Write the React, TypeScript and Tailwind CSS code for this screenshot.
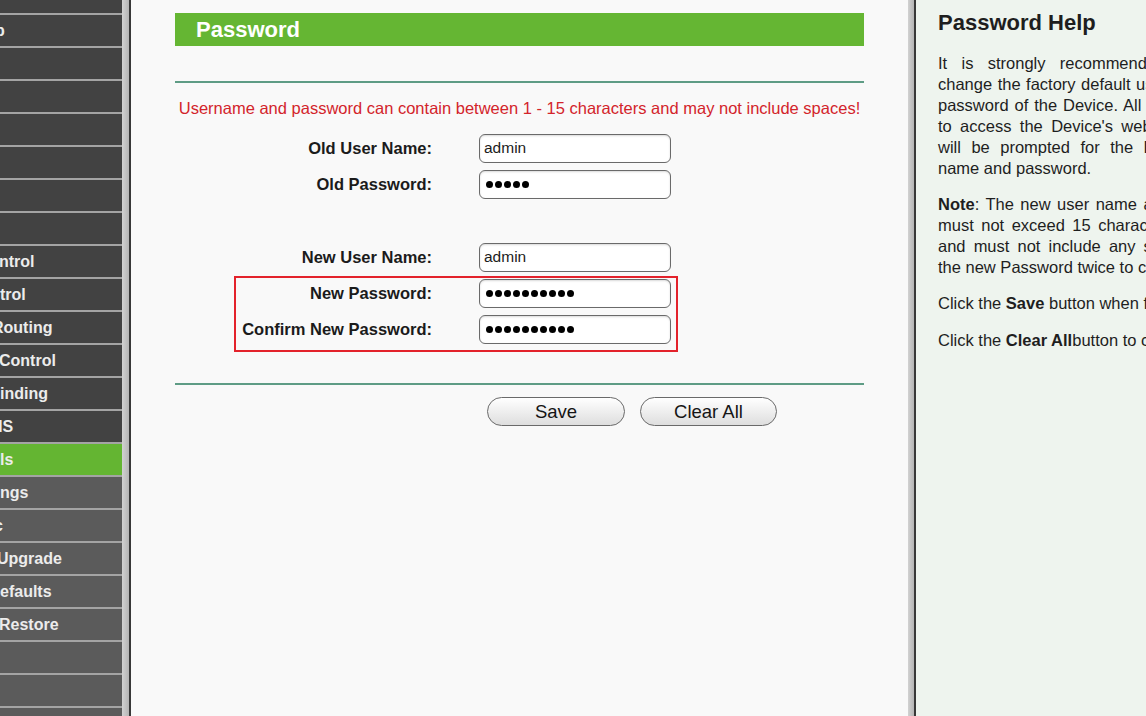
const menu = [
  { label: 'p', shift: '-ml-[5px]', tone: 'dark' },
  { label: '', shift: '', tone: 'dark' },
  { label: '', shift: '', tone: 'dark' },
  { label: '', shift: '', tone: 'dark' },
  { label: '', shift: '', tone: 'dark' },
  { label: '', shift: '', tone: 'dark' },
  { label: '', shift: '', tone: 'dark' },
  { label: 'ntrol', shift: '-ml-[1px]', tone: 'dark' },
  { label: 'trol', shift: '', tone: 'dark' },
  { label: 'Routing', shift: '-ml-[8px]', tone: 'dark' },
  { label: 'Control', shift: '-ml-[1px]', tone: 'dark' },
  { label: 'inding', shift: '', tone: 'dark' },
  { label: 'NS', shift: '-ml-[9px]', tone: 'dark' },
  { label: 'ls', shift: '', tone: 'active' },
  { label: 'ngs', shift: '', tone: 'sub' },
  { label: 'c', shift: '-ml-[6px]', tone: 'sub' },
  { label: 'Upgrade', shift: '-ml-[3px]', tone: 'sub' },
  { label: 'efaults', shift: '', tone: 'sub' },
  { label: 'Restore', shift: '-ml-[1px]', tone: 'sub' },
  { label: '', shift: '', tone: 'sub' },
  { label: '', shift: '', tone: 'sub' },
]

const toneClass: Record<string, string> = {
  dark: 'bg-[#424242]',
  active: 'bg-[#64b532]',
  sub: 'bg-[#5b5b5b]',
}

function Sidebar() {
  return (
    <nav className="flex w-[122px] shrink-0 flex-col gap-[2px] overflow-hidden bg-[#a4a4a4]">
      <div className="h-[13px] shrink-0 bg-[#424242]" />
      {menu.map((item, i) => (
        <div
          key={i}
          className={`flex h-[31px] shrink-0 items-center overflow-hidden text-[16px] font-bold text-[#ececec] ${toneClass[item.tone]}`}
        >
          <span className={`whitespace-nowrap ${item.shift}`}>{item.label}</span>
        </div>
      ))}
      <div className="min-h-0 flex-1 bg-[#5b5b5b]" />
    </nav>
  )
}

function Divider({ wide }: { wide: boolean }) {
  return (
    <div className="flex shrink-0">
      <div className={`${wide ? 'w-[7px]' : 'w-[6px]'} bg-gradient-to-r from-[#d2d2d2] to-[#b4b4b4]`} />
      <div className="w-[2px] bg-[#383838]" />
    </div>
  )
}

function Dots({ count }: { count: number }) {
  return (
    <div className="flex gap-[2px] pl-[6px]">
      {Array.from({ length: count }).map((_, i) => (
        <span key={i} className="h-[7px] w-[7px] rounded-full bg-black" />
      ))}
    </div>
  )
}

function Field({ label, value, dots }: { label: string; value?: string; dots?: number }) {
  return (
    <div className="grid h-[36px] grid-cols-[257px_192px] items-center gap-x-[47px]">
      <span className="text-right text-[16.5px] font-bold text-[#1b1b1b]">{label}</span>
      <div className="flex h-[29px] items-center rounded-[6px] border-[1.5px] border-[#6a6a6a] bg-white shadow-[inset_0_1px_2px_rgba(0,0,0,0.15)]">
        {dots ? (
          <Dots count={dots} />
        ) : (
          <span className="pl-[4px] text-[15.5px] text-[#1c1c1c]">{value}</span>
        )}
      </div>
    </div>
  )
}

function PasswordForm() {
  return (
    <main className="w-[777px] shrink-0 bg-[#f9f9f9] px-[44px] pt-[13px]">
      <div className="flex h-[33px] items-center bg-[#65b633] pl-[21px] text-[22px] font-bold text-white">
        Password
      </div>
      <div className="mt-[35px] h-[2px] bg-[#5e9c85]" />
      <p className="mt-[15px] text-center text-[16.5px] leading-[20px] text-[#d3242b]">
        Username and password can contain between 1 - 15 characters and may not include spaces!
      </p>

      <div className="mt-[12px]">
        <Field label="Old User Name:" value="admin" />
        <Field label="Old Password:" dots={5} />
        <div className="h-[37px]" />
        <Field label="New User Name:" value="admin" />
        <div className="relative">
          <Field label="New Password:" dots={10} />
          <Field label="Confirm New Password:" dots={10} />
          <div className="pointer-events-none absolute left-[59px] top-[1px] bottom-[-5px] w-[444px] border-2 border-[#e3222b]" />
        </div>
      </div>

      <div className="mt-[36px] h-[2px] bg-[#5e9c85]" />
      <div className="ml-[312px] mt-[12px] flex gap-[15px]">
        <button className="h-[29px] w-[138px] rounded-full border border-[#6a6a6a] bg-gradient-to-b from-white to-[#dedede] text-[18.5px] text-[#151515]">
          Save
        </button>
        <button className="h-[29px] w-[137px] rounded-full border border-[#6a6a6a] bg-gradient-to-b from-white to-[#dedede] text-[18.5px] text-[#151515]">
          Clear All
        </button>
      </div>
    </main>
  )
}

function HelpPanel() {
  return (
    <aside className="min-w-0 flex-1 overflow-hidden bg-[#eef4ee] pl-[22px] pt-[11px] text-[#1e1e1e]">
      <div className="w-[310px]">
        <h2 className="text-[22px] font-bold leading-[24px]">Password Help</h2>
        <p className="mt-[18px] text-justify text-[16.5px] leading-[21px]">
          It is strongly recommended that you change the factory default user name and password of the Device. All
          users who try to access the Device's web-based utility will be prompted for the Device's user name and
          password.
        </p>
        <p className="mt-[15px] text-justify text-[16.5px] leading-[21px]">
          <b>Note</b>: The new user name and password must not exceed 15 characters in length and must not include any
          spaces. Enter the new Password twice to confirm it.
        </p>
        <p className="mt-[15px] whitespace-nowrap text-[16.5px] leading-[21px]">
          Click the <b>Save</b> button when finished.
        </p>
        <p className="mt-[16px] whitespace-nowrap text-[16.5px] leading-[21px]">
          Click the <b>Clear All</b>button to clear all the fields.
        </p>
      </div>
    </aside>
  )
}

export default function App() {
  return (
    <div className="flex h-[716px] w-[1146px] overflow-hidden font-['Liberation_Sans',Arial,sans-serif]">
      <Sidebar />
      <Divider wide />
      <PasswordForm />
      <Divider wide={false} />
      <HelpPanel />
    </div>
  )
}
